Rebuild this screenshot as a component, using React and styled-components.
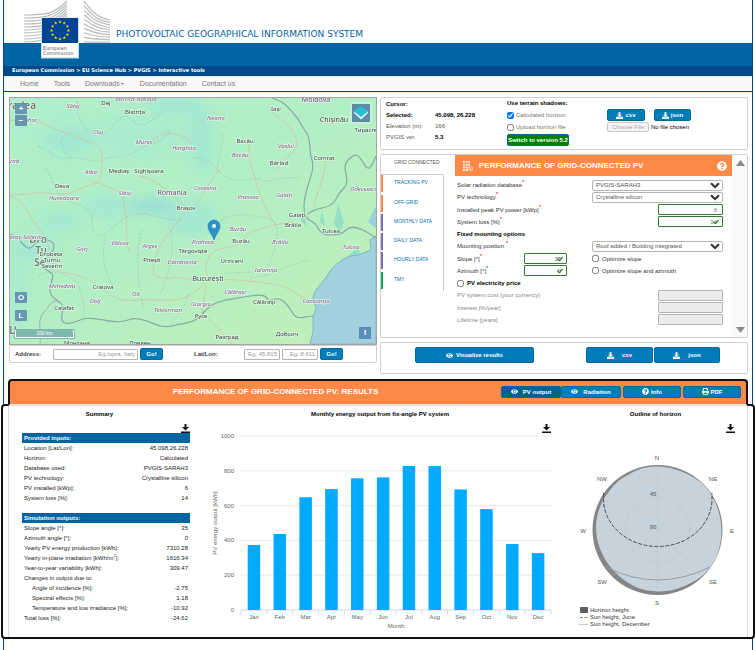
import { useState } from 'react'
import styled, { createGlobalStyle, css, ThemeProvider } from 'styled-components'
import {
	FaCaretDown,
	FaCheck,
	FaDownload,
	FaEye,
	FaPrint,
	FaQuestionCircle,
} from 'react-icons/fa'

const theme = {
	colorBlue: '#0065a2',
	colorDarkBlue: '#004b87',
	colorButton: '#007db8',
	colorOrange: '#ff8a48',
	colorGreen: '#2e7d32',
	colorBorder: '#d0d0d0',
	colorText: '#404040',
}

const GlobalStyle = createGlobalStyle`
	* {
		box-sizing: border-box;
	}
	body {
		margin: 0;
		background: white;
		color: ${props => props.theme.colorText};
		font-family: 'Liberation Sans', Arial, sans-serif;
		font-size: 6px;
		line-height: 10px;
	}
	button,
	input,
	select {
		margin: 0;
		font-family: inherit;
		font-size: inherit;
	}
`

const Page = styled.div`
	min-height: 100vh;
	margin: 0 2px 0 3px;
	border: solid ${props => props.theme.colorDarkBlue};
	border-width: 0 1px;
`

/* ---------- header ---------- */
const HeaderTop = styled.header`
	display: flex;
	align-items: flex-start;
	gap: 6px;
	height: 43px;
	padding-left: 20px;
`
const LogoSvg = styled.svg`
	flex: none;
	width: 86px;
	height: 60px;
	z-index: 1;
`
const SiteTitle = styled.h1`
	margin: 0;
	padding-top: 28px;
	font-family: 'DejaVu Sans', Verdana, sans-serif;
	font-size: 9px;
	font-weight: normal;
	line-height: 12px;
	color: ${props => props.theme.colorBlue};
`
const Band = styled.div`
	height: 23px;
	background: ${props => props.theme.colorBlue};
`
const Breadcrumb = styled.div`
	height: 10px;
	padding-left: 8px;
	background: ${props => props.theme.colorDarkBlue};
	color: white;
	font-family: 'DejaVu Sans', Verdana, sans-serif;
	font-size: 5px;
	font-weight: bold;
	line-height: 8px;
`
const Nav = styled.nav`
	display: flex;
	gap: 15px;
	height: 16px;
	padding-left: 16px;
	background: #f8f8f8;
	border-top: 1px solid #e7e7e7;
	border-bottom: 1px solid ${props => props.theme.colorDarkBlue};
	font-size: 7px;
	line-height: 14px;
`
const NavLink = styled.a`
	color: #777;
	text-decoration: none;
	svg {
		width: 5px;
		height: 5px;
	}
`

/* ---------- shared ---------- */
const Workspace = styled.main`
	display: grid;
	grid-template-columns: 1fr 1fr;
	gap: 3px;
	padding: 5px 4px 5px 5px;
`
const Panel = styled.section`
	border: 1px solid ${props => props.theme.colorBorder};
	border-radius: 2px;
	background: white;
`
const Button = styled.button`
	display: inline-flex;
	align-items: center;
	justify-content: center;
	gap: ${props => props.$gap || 2}px;
	width: ${props => props.$width}px;
	height: ${props => props.$height || 12}px;
	padding: 0;
	border: 1px solid #006a9c;
	border-radius: 2px;
	background: ${props => (props.$active ? '#00608f' : props.theme.colorButton)};
	color: white;
	font-weight: bold;
	cursor: pointer;
	svg {
		width: 7px;
		height: 7px;
	}
`
const TextInput = styled.input`
	width: ${props => props.$width}px;
	height: 11px;
	padding: 0 2px;
	border: 1px solid #b5b5b5;
	border-radius: 1px;
	background: white;
	color: #777;
	text-align: right;
	${props =>
		props.$valid &&
		css`
			border-color: ${props.theme.colorGreen};
			padding-right: 5px;
		`}
	&::placeholder {
		color: #999;
	}
	&:disabled {
		background: #ececec;
	}
`
const Checkbox = styled.input.attrs({ type: 'checkbox' })`
	width: 7px;
	height: 7px;
	flex: none;
`
const CheckLabel = styled.label`
	display: flex;
	align-items: center;
	gap: ${props => props.$gap || 3}px;
	color: ${props => props.$color || 'inherit'};
	font-weight: ${props => (props.$bold ? 'bold' : 'normal')};
`

/* ---------- map ---------- */
const MapColumn = styled.div`
	min-width: 0;
`
const MapBox = styled.div`
	position: relative;
	border: 1px solid #a3a3a3;
`
const MapSvg = styled.svg`
	display: block;
	width: 100%;
	height: auto;
	font-family: 'Noto Sans', sans-serif;
`
const MapButton = styled.button`
	position: absolute;
	width: 12px;
	height: 11px;
	padding: 0;
	border: 0;
	border-radius: 1px;
	background: #6797b0;
	color: white;
	font-size: 8px;
	font-weight: bold;
	line-height: 10px;
`
const ZoomIn = styled(MapButton)`
	top: 5px;
	left: 5px;
`
const ZoomOut = styled(MapButton)`
	top: 17px;
	left: 5px;
`
const OpacityButton = styled(MapButton)`
	bottom: 41px;
	left: 5px;
`
const LegendButton = styled(MapButton)`
	bottom: 23px;
	left: 5px;
`
const InfoButton = styled(MapButton)`
	right: 5px;
	bottom: 5px;
	height: 12px;
	background: #5a8cbb;
`
const LayersButton = styled(MapButton)`
	top: 4px;
	right: 4px;
	width: 22px;
	height: 22px;
	border: 2px solid #c8f0dc;
	border-radius: 2px;
	background: #5c8ca6;
	svg {
		display: block;
	}
`
const Scale = styled.div`
	position: absolute;
	bottom: 5px;
	left: 4px;
	width: 61px;
	height: 10px;
	padding: 1px;
	border-radius: 1px;
	background: #7fb9ad;
	color: white;
	font-size: 5px;
	line-height: 7px;
	text-align: center;
	span {
		display: block;
		height: 8px;
		border: solid white;
		border-width: 0 1px 1px;
	}
`
const AddressBar = styled(Panel).attrs({ as: 'form' })`
	display: flex;
	align-items: center;
	justify-content: space-between;
	height: 18px;
	padding: 0 33px 0 5px;
`
const AddressGroup = styled.div`
	display: flex;
	align-items: center;
	gap: 2px;
`
const AddressLabel = styled.label`
	width: ${props => props.$width}px;
	font-weight: bold;
`

/* ---------- right column ---------- */
const Side = styled.div`
	display: flex;
	flex-direction: column;
	gap: 4px;
	min-width: 0;
`
const InfoPanel = styled(Panel)`
	display: flex;
	height: 53px;
	padding: 0 5px;
	color: black;
`
const LocationTable = styled.table`
	width: 121px;
	align-self: flex-start;
	border-collapse: collapse;
	th,
	td {
		height: 11px;
		padding: 0;
		text-align: left;
		font-weight: bold;
	}
	th {
		width: 49px;
	}
`
const Plain = styled.span`
	font-weight: normal;
	color: #555;
`
const Shadows = styled.div`
	display: flex;
	flex-direction: column;
	align-items: flex-start;
	gap: 2px;
	width: 100px;
	font-weight: bold;
`
const SwitchButton = styled(Button)`
	background: #008000;
`
const Files = styled.div`
	display: flex;
	flex-direction: column;
	gap: 1px;
	padding-top: 11px;
`
const ButtonRow = styled.div`
	display: flex;
	gap: ${props => props.$gap}px;
`
const FileInput = styled.input.attrs({ type: 'file' })`
	width: 92px;
	height: 11px;
	color: black;
	&::file-selector-button {
		width: 42px;
		height: 10px;
		margin: 0 2px 0 0;
		padding: 0;
		border: 1px solid #c8c8c8;
		border-radius: 2px;
		background: #f4f4f4;
		color: #aaa;
		font: inherit;
	}
`

const ToolPanel = styled(Panel)`
	display: flex;
	height: 184px;
`
const Tabs = styled.div`
	display: flex;
	flex-direction: column;
	width: 63px;
	height: 136px;
`
const Tab = styled.button`
	display: flex;
	flex: 1;
	align-items: flex-start;
	padding: 0;
	border: 0;
	border-right: 1px solid #ccc;
	background: none;
	color: #0072ad;
	font-size: 5px;
	text-align: left;
	cursor: pointer;
	${props =>
		props.$active &&
		css`
			border-right-color: white;
			border-bottom: 1px solid #ccc;
			color: #555;
		`}
	span {
		display: block;
		height: 17px;
		padding-left: 11px;
		border-left: 2px solid ${props => props.$color};
		line-height: 15px;
	}
`
const Form = styled.form`
	display: flex;
	flex: 1;
	flex-direction: column;
	margin-left: 11px;
`
const FormHeader = styled.div`
	display: flex;
	align-items: center;
	gap: 6px;
	height: 21px;
	padding: 0 5px 0 8px;
	background: ${props => props.theme.colorOrange};
	color: white;
	svg {
		width: 10px;
		height: 10px;
	}
`
const Heading = styled.h2`
	flex: 1;
	margin: 0;
	color: white;
	font-size: 8px;
	line-height: 12px;
	text-align: ${props => props.$align || 'left'};
`
const FormRows = styled.div`
	display: grid;
	flex: 1;
	grid-auto-rows: 1fr;
	padding: 3px 9px 11px 2px;
`
const Row = styled.div`
	display: flex;
	align-items: center;
	justify-content: space-between;
	color: ${props => (props.$muted ? '#888' : '#333')};
`
const RowLeft = styled.div`
	display: flex;
	align-items: center;
	justify-content: space-between;
	width: 110px;
	white-space: nowrap;
`
const RowRight = styled.div`
	display: flex;
	width: 131px;
	justify-content: ${props => props.$justify || 'flex-start'};
`
const Required = styled.sup`
	color: #d00;
	font-size: 6px;
	line-height: 0;
`
const SubHeading = styled.h3`
	margin: 0;
	color: black;
	font-size: 6px;
`
const SelectWrap = styled.div`
	position: relative;
	width: 100%;
	height: 11px;
	svg {
		position: absolute;
		top: 2px;
		right: 3px;
		width: 10px;
		height: 7px;
		pointer-events: none;
	}
`
const Select = styled.select`
	display: block;
	width: 100%;
	height: 11px;
	padding: 0 3px;
	border: 1px solid #b5b5b5;
	border-radius: 2px;
	appearance: none;
	background: white;
	color: #555;
`
const ValidWrap = styled.div`
	position: relative;
	display: flex;
	svg {
		position: absolute;
		top: 3px;
		right: 4px;
		width: 6px;
		height: 6px;
		color: ${props => props.theme.colorGreen};
	}
`
const Scroller = styled.div`
	display: flex;
	flex-direction: column;
	justify-content: space-between;
	width: 15px;
	padding: 5px 2px 4px 4px;
	background: #fafafa;
	svg {
		width: 9px;
		height: 7px;
		fill: #8a8a8a;
	}
`
const ActionPanel = styled(Panel)`
	display: flex;
	align-items: flex-start;
	justify-content: space-between;
	height: 32px;
	padding: 4px 27px 0 34px;
`

/* ---------- results ---------- */
const Results = styled.section`
	margin: 0 -3px;
`
const ResultsHeader = styled.div`
	position: relative;
	display: flex;
	align-items: center;
	height: 27px;
	margin: 0 7px -2px;
	padding: 0 5px 2px 40px;
	border: 2px solid #111;
	border-bottom: 2px solid #e2e2e2;
	border-radius: 4px 4px 0 0;
	background: ${props => props.theme.colorOrange};
`
const ResultsBody = styled.div`
	padding: 0 5px;
	border: 2px solid #111;
	border-radius: 4px;
	background: white;
`
const ResultsGrid = styled.div`
	display: grid;
	grid-template-columns: 181fr 380fr 171fr;
	padding: 0 6px 4px 0;
	border: solid #ddd;
	border-width: 0 1px;
`
const ResultTitle = styled.h3`
	height: 18px;
	margin: 0;
	padding-top: 3px;
	color: black;
	font-size: 6px;
	text-align: center;
`
const SaveRow = styled.div`
	display: flex;
	justify-content: flex-end;
	height: 9px;
	padding-right: ${props => props.$inset || 0}px;
`
const SaveButton = styled.button`
	width: 9px;
	height: 9px;
	padding: 0;
	border: 0;
	background: none;
	svg {
		display: block;
	}
`
const SummaryTable = styled.table`
	width: calc(100% - 13px);
	margin: 0 0 10px 13px;
	border-collapse: collapse;
	color: #222;
	th,
	td {
		height: 10px;
		padding: 0 2px;
		font-weight: normal;
		text-align: left;
		white-space: nowrap;
	}
	td {
		text-align: right;
	}
	thead th {
		background: ${props => props.theme.colorBlue};
		color: white;
		font-weight: bold;
	}
	sup {
		font-size: 4px;
		line-height: 0;
	}
`
const RowHead = styled.th`
	&& {
		padding-left: ${props => (props.$indent ? 10 : 2)}px;
	}
`
const Drawing = styled.svg`
	display: block;
	width: 100%;
	height: auto;
`

const lerp = (a, b, t) => a + (b - a) * t

function starPoints(cx, cy, r) {
	return Array.from({ length: 10 }, (_, i) => {
		const a = (Math.PI / 5) * i - Math.PI / 2
		const d = i % 2 ? r * 0.4 : r
		return `${(cx + d * Math.cos(a)).toFixed(2)},${(cy + d * Math.sin(a)).toFixed(2)}`
	}).join(' ')
}

function Logo() {
	const lines = Array.from({ length: 10 }, (_, i) => i / 9)
	return (
		<LogoSvg viewBox="0 0 86 60" role="img" aria-label="European Commission">
			<g fill="none" stroke="#b9bcbe" strokeWidth="1.2">
				{lines.map(t => (
					<path
						key={t}
						d={`M0 ${lerp(15, 42, t)} C22 ${lerp(15, 42, t)} 30 ${lerp(14, 36, t)} 43 ${lerp(1, 24, t)}`}
					/>
				))}
				{lines.map(t => (
					<path
						key={t}
						d={`M60 ${lerp(1, 42, t)} C66 ${lerp(8, 42, t)} 70 ${lerp(17, 42, t)} 86 ${lerp(20, 42, t)}`}
					/>
				))}
			</g>
			<rect x="17" y="17.5" width="38" height="41" fill="#cfe0ea" />
			<rect x="18" y="18" width="36" height="25" fill="#004494" />
			<rect x="18" y="43" width="36" height="14" fill="white" />
			{Array.from({ length: 12 }, (_, i) => (
				<polygon
					key={i}
					fill="#ffe100"
					points={starPoints(
						36 + 8.5 * Math.sin((Math.PI / 6) * i),
						30.5 - 8.5 * Math.cos((Math.PI / 6) * i),
						1.8
					)}
				/>
			))}
			<g fill="#555" fontFamily="DejaVu Sans, sans-serif" fontSize="5">
				<text x="19" y="49.5">European</text>
				<text x="19" y="55">Commission</text>
			</g>
		</LogoSvg>
	)
}

const counties = [
	['Sălaj', 63, 8], ['Bistrița-Năsăud', 126, 1], ['Bihor', 20, 22], ['Cluj', 88, 34],
	['Mureș', 134, 44], ['Harghita', 174, 50], ['Arad', 3, 63], ['Alba', 81, 74],
	['Hunedoara', 54, 100], ['Sibiu', 115, 95], ['Caraș-Severin', 14, 139], ['Neamț', 206, 20],
	['Bacău', 230, 57], ['Vaslui', 276, 48], ['Covasna', 195, 90], ['Одеська о', 354, 91],
	['Vrancea', 238, 99], ['Galați', 274, 97], ['Buzău', 228, 131], ['Prahova', 193, 144],
	['Brăila', 270, 144], ['Tulcea', 341, 149], ['Ialomița', 256, 172], ['Călărași', 225, 194],
	['Constanța', 306, 203], ['Giurgiu', 191, 206], ['Gorj', 72, 151], ['Vâlcea', 110, 145],
	['Argeș', 140, 148], ['Dâmbovița', 172, 164], ['Mehedinți', 52, 188], ['Olt', 126, 196],
	['Dolj', 85, 203], ['Teleorman', 158, 212],
]
const towns = [
	['Dej', 96, 5], ['Bistrița', 125, 14], ['Mediaș', 109, 73], ['Sighișoara', 139, 73],
	['Deva', 52, 88], ['Brașov', 176, 110], ['Iași', 266, 11], ['Тирасполь', 360, 32],
	['Bacău', 235, 43], ['Bârlad', 269, 65], ['Comrat', 314, 60], ['Galați', 287, 117],
	['Brăila', 283, 127], ['Tulcea', 321, 133], ['Buzău', 231, 143], ['Târgoviște', 183, 153],
	['Urziceni', 222, 163], ['Călărași', 254, 204], ['Русе', 191, 218], ['Разград', 217, 239],
	['Добрич', 277, 236], ['Drobeta', 41, 156], ['Turnu', 42, 162], ['Severin', 42, 168],
	['Pitești', 142, 162], ['Craiova', 93, 189], ['Calafat', 54, 210], ['Монтана', 67, 245],
	['Плевен', 130, 245],
]

function CountryMap() {
	return (
		<MapSvg viewBox="0 0 366 246" role="img" aria-label="Map of Romania">
			<defs>
				<linearGradient id="land" x1="0" y1="0" x2="1" y2="1">
					<stop offset="0" stopColor="#aeeecb" />
					<stop offset="0.5" stopColor="#b3efc5" />
					<stop offset="1" stopColor="#c2f0b8" />
				</linearGradient>
				<filter id="soft" x="-50%" y="-50%" width="200%" height="200%">
					<feGaussianBlur stdDeviation="6" />
				</filter>
			</defs>
			<rect width="366" height="246" fill="url(#land)" />
			<g fill="#9ce4dc" filter="url(#soft)" opacity="0.6">
				<ellipse cx="60" cy="42" rx="26" ry="13" />
				<ellipse cx="165" cy="8" rx="30" ry="10" />
				<ellipse cx="192" cy="42" rx="12" ry="34" />
				<ellipse cx="144" cy="108" rx="26" ry="7" fill="#86d0e4" />
				<ellipse cx="98" cy="108" rx="24" ry="11" />
				<ellipse cx="50" cy="124" rx="22" ry="9" />
				<ellipse cx="180" cy="120" rx="26" ry="17" />
				<ellipse cx="22" cy="150" rx="20" ry="14" />
				<ellipse cx="6" cy="200" rx="12" ry="36" opacity="0.6" />
				<ellipse cx="130" cy="40" rx="50" ry="20" opacity="0.4" />
			</g>
			<path d="M288 118 L294 114 L297 130 Z M328 106 L334 124 L330 134 L324 126 Z M312 112 L315 128 L310 124 Z M338 158 L348 148 L352 160 L342 168 Z" fill="#93e0c4" />
			<path d="M366 108 L358 124 L366 130 Z" fill="#9ad0de" />
			<path
				d="M366 138 L360 142 L361 152 L348 157 C338 157 328 163 320 173 C314 184 304 192 303 199 L306 210 L303 219 L303 234 L300 246 L366 246 Z"
				fill="#9fd2dd"
				stroke="#86b2c4"
			/>
			<g fill="none" stroke="#dcb89a" strokeWidth="0.8" opacity="0.8">
				<path d="M0 22 C22 24 30 24 38 28 S52 33 62 37 S74 42 82 45 S92 53 92 60 S92 73 90 80 S84 85 72 90 S62 95 56 96 S30 93 18 96 L0 97" />
				<path d="M82 84 C92 84 98 90 106 92 S114 108 116 118 S114 140 120 155" />
				<path d="M130 78 C144 80 160 95 170 104 S184 112 192 98 S204 78 214 68 M176 112 C166 130 150 138 144 165 S170 172 184 184" />
				<path d="M200 183 C192 170 196 152 214 150 S232 142 236 138 S252 128 284 124" />
				<path d="M200 182 C226 180 246 184 262 186 S280 194 302 203" />
				<path d="M40 172 C60 176 76 176 94 192 S122 200 150 202 S180 196 196 186 M196 188 L192 214 S208 230 222 246" />
				<path d="M240 44 C236 58 242 70 246 84 S256 112 266 128 M316 62 C314 82 306 96 304 108" />
				<path d="M0 98 C16 102 20 122 30 132 S38 150 42 168" />
				<path d="M140 45 C150 32 170 32 182 46 M262 14 C270 22 280 26 286 40 S270 60 268 72" />
			</g>
			<g fill="none" stroke="#7f9d9a" strokeWidth="0.6" strokeDasharray="2 1.5" opacity="0.6">
				<path d="M28 48 C44 54 44 62 58 60 S84 66 92 62 S118 60 128 52 S152 48 160 32" />
				<path d="M36 70 C44 82 42 98 66 106 S78 122 84 134 S104 126 118 118 S156 124 172 122" />
				<path d="M68 4 C64 18 74 26 78 34 M92 38 C104 30 112 10 122 22 S144 20 156 12" />
				<path d="M184 60 C200 58 206 74 218 80 S244 78 252 82 S266 78 290 80 M212 34 C216 48 204 66 208 76" />
				<path d="M96 138 C90 160 96 176 104 190 M132 132 C126 150 126 180 134 212 M160 132 C166 150 158 182 150 196" />
				<path d="M210 124 C222 112 240 118 256 120 S268 140 262 160 S232 172 212 176" />
				<path d="M240 180 C262 178 278 166 300 162 M28 178 C40 170 60 176 66 184 S78 220 72 226" />
				<path d="M56 36 C48 42 52 48 56 56 M178 196 C176 208 164 222 160 228" />
			</g>
			<g fill="none" stroke="#86aaa5" strokeWidth="1.2">
				<path d="M262 0 C276 4 278 10 284 16 S290 26 296 34 S298 50 302 62 S294 90 294 108 S304 120 308 130 S330 138 336 132 S352 130 366 140" />
				<path d="M298 116 C306 108 318 112 324 104 S326 98 334 90 S330 70 338 62 S348 56 354 66 S362 66 366 58" />
				<path d="M0 137 C8 136 12 148 18 150 S26 138 38 142 S42 156 34 162 S38 172 42 176 S34 192 44 200 S54 206 52 216 S56 228 70 222 S102 228 118 222 S146 232 162 228 S184 226 194 214 S216 202 240 198 S254 206 262 202 S276 204 282 214 S292 218 304 218" />
				<path d="M30 246 C32 228 26 224 34 214 S42 202 50 204" strokeWidth="0.8" />
			</g>
			<g textAnchor="middle" stroke="#ddf7e4" strokeWidth="1.5" paintOrder="stroke" strokeLinejoin="round">
				<g fontSize="10" fontWeight="600" fill="#6c7a74">
					<text x="26" y="11" textAnchor="end">Oradea</text>
					<text x="28" y="145">Dro</text>
					<text x="31" y="156">Tu</text>
					<text x="30" y="168">Se</text>
					<text x="3" y="236">Ц</text>
				</g>
				<g fontSize="6" fontStyle="italic" fill="#8a5a94">
					{counties.map(([name, x, y]) => (
						<text key={name} x={x} y={y + 2}>{name}</text>
					))}
				</g>
				<g fontSize="6" fill="#3c4440">
					{towns.map(([name, x, y]) => (
						<text key={name} x={x} y={y + 2}>{name}</text>
					))}
				</g>
				<g fontSize="7">
					<text x="162" y="97" fill="#77457c">Romania</text>
					<text x="306" y="4" fill="#77457c">Moldova</text>
					<text x="324" y="24" fill="#3c4440">Chișinău</text>
					<text x="198" y="183" fill="#3c4440">București</text>
				</g>
			</g>
			<path d="M204 142 C202 136 198 133 198 128 A6 6 0 0 1 210 128 C210 133 206 136 204 142 Z" fill="#2a93cb" stroke="#1f7db0" strokeWidth="0.6" />
			<circle cx="204" cy="128" r="2" fill="white" />
		</MapSvg>
	)
}

const TabList = [
	['GRID CONNECTED', 'transparent'],
	['TRACKING PV', '#ff8a48'],
	['OFF-GRID', '#ff8a48'],
	['MONTHLY DATA', '#7d6bb3'],
	['DAILY DATA', '#7d6bb3'],
	['HOURLY DATA', '#7d6bb3'],
	['TMY', '#00a65a'],
]

function SelectField({ id, value }) {
	return (
		<SelectWrap>
			<Select id={id} defaultValue={value}>
				<option>{value}</option>
			</Select>
			<svg viewBox="0 0 10 7">
				<path d="M1 1.2 L5 5 L9 1.2" fill="none" stroke="#333" strokeWidth="2" />
			</svg>
		</SelectWrap>
	)
}

function NumberField({ id, width, value, check }) {
	return (
		<ValidWrap>
			<TextInput id={id} $width={width} $valid defaultValue={value} />
			{check && <FaCheck />}
		</ValidWrap>
	)
}

function FieldLabel({ htmlFor, children }) {
	return (
		<label htmlFor={htmlFor}>
			{children}
			<Required>*</Required>
		</label>
	)
}

function GridIcon() {
	return (
		<svg viewBox="0 0 10 10">
			<path d="M0 0H7V5H5V10H0Z" fill="#ffe3d3" />
			<path d="M0 2.5H7M0 5H5M0 7.5H5M2.3 0V10M4.7 0V5" stroke="#ff8a48" strokeWidth="0.6" />
			<circle cx="7.6" cy="7.6" r="2" fill="none" stroke="#ffe3d3" strokeWidth="0.9" />
			<path d="M7.6 6.6V8.6" stroke="#ffe3d3" strokeWidth="0.8" />
		</svg>
	)
}

function PvForm() {
	return (
		<Form onSubmit={e => e.preventDefault()}>
			<FormHeader>
				<GridIcon />
				<Heading>PERFORMANCE OF GRID-CONNECTED PV</Heading>
				<FaQuestionCircle />
			</FormHeader>
			<FormRows>
				<Row>
					<RowLeft><FieldLabel htmlFor="database">Solar radiation database</FieldLabel></RowLeft>
					<RowRight><SelectField id="database" value="PVGIS-SARAH3" /></RowRight>
				</Row>
				<Row>
					<RowLeft><FieldLabel htmlFor="technology">PV technology</FieldLabel></RowLeft>
					<RowRight><SelectField id="technology" value="Crystalline silicon" /></RowRight>
				</Row>
				<Row>
					<RowLeft><FieldLabel htmlFor="peak">Installed peak PV power [kWp]</FieldLabel></RowLeft>
					<RowRight $justify="flex-end"><NumberField id="peak" width={65} value="6" /></RowRight>
				</Row>
				<Row>
					<RowLeft><FieldLabel htmlFor="loss">System loss [%]</FieldLabel></RowLeft>
					<RowRight $justify="flex-end"><NumberField id="loss" width={65} value="14" check /></RowRight>
				</Row>
				<Row><SubHeading>Fixed mounting options</SubHeading></Row>
				<Row>
					<RowLeft><FieldLabel htmlFor="mounting">Mounting position </FieldLabel></RowLeft>
					<RowRight><SelectField id="mounting" value="Roof added / Building integrated" /></RowRight>
				</Row>
				<Row>
					<RowLeft>
						<FieldLabel htmlFor="slope">Slope [°]</FieldLabel>
						<NumberField id="slope" width={43} value="35" check />
					</RowLeft>
					<RowRight><CheckLabel><Checkbox />Optimize slope</CheckLabel></RowRight>
				</Row>
				<Row>
					<RowLeft>
						<FieldLabel htmlFor="azimuth">Azimuth [°]</FieldLabel>
						<NumberField id="azimuth" width={43} value="0" check />
					</RowLeft>
					<RowRight><CheckLabel><Checkbox />Optimize slope and azimuth</CheckLabel></RowRight>
				</Row>
				<Row><CheckLabel $bold $color="black"><Checkbox />PV electricity price</CheckLabel></Row>
				{['PV system cost (your currency)', 'Interest [%/year]', 'Lifetime [years]'].map((label, i) => (
					<Row key={label} $muted>
						<label htmlFor={`price-${i}`}>{label}</label>
						<TextInput id={`price-${i}`} $width={65} disabled />
					</Row>
				))}
			</FormRows>
		</Form>
	)
}

function SaveIcon() {
	return (
		<svg viewBox="0 0 9 9" width="9" height="9">
			<path d="M3.5 0 h2 v3 h2.5 L4.5 6.5 L1 3 h2.5 Z M0 7.500 h9 v1.500 h-9 Z" fill="#111" />
		</svg>
	)
}

const inputs = [
	['Location [Lat/Lon]:', '45.098,26.228'],
	['Horizon:', 'Calculated'],
	['Database used:', 'PVGIS-SARAH3'],
	['PV technology:', 'Crystalline silicon'],
	['PV installed [kWp]:', '6'],
	['System loss [%]:', '14'],
]
const outputs = [
	['Slope angle [°]:', '35'],
	['Azimuth angle [°]:', '0'],
	['Yearly PV energy production [kWh]:', '7310.28'],
	[<>Yearly in-plane irradiation [kWh/m<sup>2</sup>]:</>, '1616.34'],
	['Year-to-year variability [kWh]:', '309.47'],
	['Changes in output due to:', ''],
	['Angle of incidence [%]:', '-2.75', true],
	['Spectral effects [%]:', '1.18', true],
	['Temperature and low irradiance [%]:', '-10.92', true],
	['Total loss [%]:', '-24.62'],
]

function Summary({ title, rows }) {
	return (
		<SummaryTable>
			<thead>
				<tr><th colSpan="2">{title}</th></tr>
			</thead>
			<tbody>
				{rows.map(([label, value, indent], i) => (
					<tr key={i}>
						<RowHead scope="row" $indent={indent}>{label}</RowHead>
						<td>{value}</td>
					</tr>
				))}
			</tbody>
		</SummaryTable>
	)
}

const months = [
	['Jan', 374], ['Feb', 437], ['Mar', 648], ['Apr', 695], ['May', 757], ['Jun', 762],
	['Jul', 828], ['Aug', 827], ['Sep', 693], ['Oct', 580], ['Nov', 379], ['Dec', 327],
]

function EnergyChart() {
	const left = 51
	const bottom = 177
	const slot = 310 / 12
	return (
		<Drawing viewBox="0 0 380 200" fontSize="6" fill="#666" role="img" aria-label="Monthly energy output">
			{[0, 200, 400, 600, 800, 1000].map(v => {
				const y = bottom - v * 0.174
				return (
					<g key={v}>
						<path d={`M${left} ${y}H361`} stroke={v ? '#ebebeb' : '#ccd6eb'} />
						<text x={44} y={y + 2} textAnchor="end">{v}</text>
					</g>
				)
			})}
			{months.map(([name, value], i) => {
				const x = left + slot * i
				return (
					<g key={name}>
						<rect x={x + 6.7} y={bottom - value * 0.174} width="12.5" height={value * 0.174} fill="#00aaff" />
						<text x={x + slot / 2} y="186" textAnchor="middle">{name}</text>
					</g>
				)
			})}
			{Array.from({ length: 13 }, (_, i) => (
				<path key={i} d={`M${left + slot * i} ${bottom}v5`} stroke="#ccd6eb" strokeWidth="0.8" />
			))}
			<text x="206" y="195" textAnchor="middle">Month</text>
			<text transform="translate(27 90) rotate(-90)" textAnchor="middle">PV energy output [kWh]</text>
		</Drawing>
	)
}

const compass = [
	['N', 87, 27], ['NE', 143, 48], ['E', 162, 100], ['SE', 143, 151],
	['S', 87, 172], ['SW', 32, 151], ['W', 13, 100], ['NW', 32, 48],
]

function HorizonPlot() {
	return (
		<Drawing viewBox="0 0 171 200" fontSize="6" fill="#555" role="img" aria-label="Outline of horizon">
			<circle cx="87.5" cy="97" r="65" fill="#858585" />
			<path
				d="M88 33.500 C104 33.500 123 42 134 52 C145 64 151 80 151.5 97 C151.5 118 143 136 128 146 C115 154 103 158.5 88 158.5 C70 158.5 55 150 44 138 C31 124 26 108 26 94 C26 82 31 68 38 60 C45 50 50 46 58 42 C67 36 76 33.500 88 33.500 Z"
				fill="#c7d3dc"
			/>
			<g fill="none" stroke="#b9c5ce" strokeWidth="0.5">
				<circle cx="87.5" cy="97" r="32.5" />
				<path d="M87.5 34V158M26 97H151M42 51.5L133 142.5M133 51.5L42 142.5" />
			</g>
			<path d="M33.5 60 V66 A54.25 47.5 0 0 0 142 66 V60" fill="none" stroke="#444f58" strokeDasharray="4 1.5" />
			<path d="M36 134 Q87.5 160 140 134" fill="none" stroke="#8c979f" strokeWidth="0.9" />
			<g textAnchor="middle">
				{compass.map(([name, x, y]) => (
					<text key={name} x={x} y={y}>{name}</text>
				))}
				<text x="83" y="63">45</text>
				<text x="83" y="96">90</text>
			</g>
			<rect x="10" y="174" width="8" height="6" fill="#606060" />
			<path d="M10 184.500h8" stroke="#888" strokeDasharray="3 1.500" />
			<path d="M9 191.500h9" stroke="#ccc" />
			<g fill="#333">
				<text x="20" y="179">Horizon height</text>
				<text x="20" y="186">Sun height, June</text>
				<text x="20" y="193">Sun height, December</text>
			</g>
		</Drawing>
	)
}

function App() {
	const [tab, setTab] = useState('GRID CONNECTED')
	const [view, setView] = useState('output')

	return (
		<ThemeProvider theme={theme}>
			<GlobalStyle />
			<Page>
				<HeaderTop>
					<Logo />
					<SiteTitle>PHOTOVOLTAIC GEOGRAPHICAL INFORMATION SYSTEM</SiteTitle>
				</HeaderTop>
				<Band />
				<Breadcrumb>European Commission &gt; EU Science Hub &gt; PVGIS &gt; Interactive tools</Breadcrumb>
				<Nav>
					<NavLink href="#home">Home</NavLink>
					<NavLink href="#tools">Tools</NavLink>
					<NavLink href="#downloads">Downloads<FaCaretDown /></NavLink>
					<NavLink href="#documentation">Documentation</NavLink>
					<NavLink href="#contact">Contact us</NavLink>
				</Nav>

				<Workspace>
					<MapColumn>
						<MapBox>
							<CountryMap />
							<ZoomIn>+</ZoomIn>
							<ZoomOut>−</ZoomOut>
							<OpacityButton>O</OpacityButton>
							<LegendButton>L</LegendButton>
							<Scale><span>100 km</span></Scale>
							<InfoButton>I</InfoButton>
							<LayersButton aria-label="Layers">
								<svg viewBox="0 0 18 18" width="18" height="18">
									<path d="M2 9 L9 15.500 L16 9 L16 7 L2 7 Z" fill="#e6f6f8" />
									<path d="M9 2 L16 7.500 L9 13 L2 7.500 Z" fill="#27c0d2" />
								</svg>
							</LayersButton>
						</MapBox>
						<AddressBar onSubmit={e => e.preventDefault()}>
							<AddressGroup>
								<AddressLabel htmlFor="address" $width={36}>Address:</AddressLabel>
								<TextInput id="address" $width={85} placeholder="Eg.Ispra, Italy" />
								<Button $width={23}>Go!</Button>
							</AddressGroup>
							<AddressGroup>
								<AddressLabel htmlFor="lat" $width={48}>Lat/Lon:</AddressLabel>
								<TextInput id="lat" $width={36} placeholder="Eg. 45.815" />
								<TextInput aria-label="Longitude" $width={36} placeholder="Eg. 8.611" />
								<Button $width={23}>Go!</Button>
							</AddressGroup>
						</AddressBar>
					</MapColumn>

					<Side>
						<InfoPanel>
							<LocationTable>
								<tbody>
									<tr><th>Cursor:</th><td /></tr>
									<tr><th>Selected:</th><td>45.098, 26.228</td></tr>
									<tr><th><Plain>Elevation (m):</Plain></th><td><Plain>166</Plain></td></tr>
									<tr><th><Plain>PVGIS ver.</Plain></th><td>5.3</td></tr>
								</tbody>
							</LocationTable>
							<Shadows>
								Use terrain shadows:
								<CheckLabel $gap={2} $color="#777"><Checkbox defaultChecked />Calculated horizon</CheckLabel>
								<CheckLabel $gap={2} $color="#777"><Checkbox />Upload horizon file</CheckLabel>
								<SwitchButton $width={62}>Switch to version 5.2</SwitchButton>
							</Shadows>
							<Files>
								<ButtonRow $gap={9}>
									<Button $width={38}><FaDownload />csv</Button>
									<Button $width={37}><FaDownload />json</Button>
								</ButtonRow>
								<FileInput aria-label="Horizon file" />
							</Files>
						</InfoPanel>

						<ToolPanel>
							<Tabs role="tablist">
								{TabList.map(([name, color]) => (
									<Tab key={name} role="tab" $color={color} $active={tab === name} onClick={() => setTab(name)}>
										<span>{name}</span>
									</Tab>
								))}
							</Tabs>
							<PvForm />
							<Scroller>
								<svg viewBox="0 0 9 7"><path d="M4.5 0 L9 6 H0 Z" /></svg>
								<svg viewBox="0 0 9 7"><path d="M4.5 7 L9 1 H0 Z" /></svg>
							</Scroller>
						</ToolPanel>

						<ActionPanel>
							<Button $width={119} $height={16} $gap={3}><FaEye />Visualize results</Button>
							<ButtonRow $gap={1}>
								<Button $width={67} $height={16} $gap={8}><FaDownload />csv</Button>
								<Button $width={66} $height={16} $gap={8}><FaDownload />json</Button>
							</ButtonRow>
						</ActionPanel>
					</Side>
				</Workspace>

				<Results>
					<ResultsHeader>
						<Heading $align="center">PERFORMANCE OF GRID-CONNECTED PV: RESULTS</Heading>
						<ButtonRow $gap={2}>
							<ButtonRow $gap={0}>
								<Button $width={60} $gap={5} $active={view === 'output'} onClick={() => setView('output')}><FaEye />PV output</Button>
								<Button $width={60} $gap={5} $active={view === 'radiation'} onClick={() => setView('radiation')}><FaEye />Radiation</Button>
							</ButtonRow>
							<Button $width={58}><FaQuestionCircle />Info</Button>
							<Button $width={58}><FaPrint />PDF</Button>
						</ButtonRow>
					</ResultsHeader>
					<ResultsBody>
						<ResultsGrid>
							<div>
								<ResultTitle>Summary</ResultTitle>
								<SaveRow><SaveButton aria-label="Save summary"><SaveIcon /></SaveButton></SaveRow>
								<Summary title="Provided inputs:" rows={inputs} />
								<Summary title="Simulation outputs:" rows={outputs} />
							</div>
							<div>
								<ResultTitle>Monthly energy output from fix-angle PV system</ResultTitle>
								<SaveRow $inset={19}><SaveButton aria-label="Save chart"><SaveIcon /></SaveButton></SaveRow>
								<EnergyChart />
							</div>
							<div>
								<ResultTitle>Outline of horizon</ResultTitle>
								<SaveRow $inset={6}><SaveButton aria-label="Save horizon"><SaveIcon /></SaveButton></SaveRow>
								<HorizonPlot />
							</div>
						</ResultsGrid>
					</ResultsBody>
				</Results>
			</Page>
		</ThemeProvider>
	)
}

export default App
